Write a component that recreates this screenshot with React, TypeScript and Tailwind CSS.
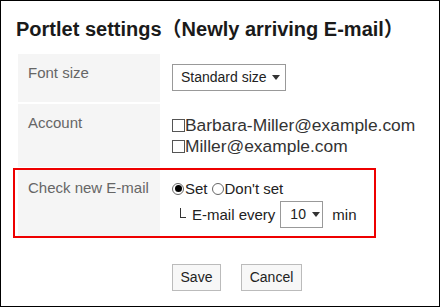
const FONT = "font-['Liberation_Sans','Noto_Sans_CJK_JP',Arial,sans-serif]";

const Caret = () => (
  <svg width="8" height="5" viewBox="0 0 8 5" className="shrink-0">
    <polygon points="0,0 8,0 4,5" fill="#333" />
  </svg>
);

const Check = ({ label }: { label: string }) => (
  <div className="flex items-center h-[21px]">
    <span className="w-[13px] h-[13px] border border-[#555] bg-white shrink-0" />
    <span>{label}</span>
  </div>
);

const Radio = ({ checked, label }: { checked?: boolean; label: string }) => (
  <span className="flex items-center">
    <span className="w-[12px] h-[12px] rounded-full border border-[#666] flex items-center justify-center mr-[1px]">
      {checked && <span className="w-[7px] h-[7px] rounded-full bg-black" />}
    </span>
    <span>{label}</span>
  </span>
);

export default function App() {
  return (
    <div className={`w-[440px] h-[307px] border border-black bg-white ${FONT}`}>
      <h1 className="pt-[17px] pl-[15px] text-[20px] leading-[23px] font-bold text-[#1a1a1a] whitespace-nowrap">
        Portlet settings（Newly arriving E-mail）
      </h1>

      <div className="mt-[13px] ml-[17px] flex flex-col gap-[2px]">
        {/* Font size */}
        <div className="flex h-[48px]">
          <div className="w-[142px] bg-[#f5f5f5] pl-[10px] pt-[10px] text-[15px] leading-[17px] text-[#666]">
            Font size
          </div>
          <div className="pl-[12px] pt-[10px]">
            <div className="w-[114px] h-[27px] border border-[#999] bg-white flex items-center pl-[8px] gap-[5px] text-[14px] text-[#222]">
              <span>Standard size</span>
              <Caret />
            </div>
          </div>
        </div>

        {/* Account */}
        <div className="flex h-[63px]">
          <div className="w-[142px] bg-[#f5f5f5] pl-[10px] pt-[10px] text-[15px] leading-[17px] text-[#666]">
            Account
          </div>
          <div className="pl-[12px] pt-[11px] text-[17.4px] leading-[21px] text-[#333]">
            <Check label="Barbara-Miller@example.com" />
            <Check label="Miller@example.com" />
          </div>
        </div>

        {/* Check new E-mail */}
        <div className="relative flex h-[68px]">
          <div className="w-[142px] bg-[#f5f5f5] pl-[10px] pt-[10px] text-[15px] leading-[17px] text-[#666]">
            Check new E-mail
          </div>
          <div className="pl-[12px] pt-[11px] text-[15px] leading-[17px] text-[#222]">
            <div className="flex items-center gap-[4px]">
              <Radio checked label="Set" />
              <Radio label="Don't set" />
            </div>
            <div className="flex items-center mt-[4px] pl-[8px]">
              <span className="w-[6px] h-[10px] border-l border-b border-[#333] mr-[6px] -mt-[4px]" />
              <span>E-mail every</span>
              <div className="ml-[5px] w-[43px] h-[27px] border border-[#999] bg-white flex items-center pl-[9px] gap-[6px] text-[14px]">
                <span>10</span>
                <Caret />
              </div>
              <span className="ml-[9px]">min</span>
            </div>
          </div>
          <div className="absolute left-[-5px] top-[-1px] w-[363px] h-[70px] border-2 border-[#ee0000] pointer-events-none" />
        </div>
      </div>

      <div className="mt-[27px] pl-[171px] flex gap-[20px] text-[14px] text-[#222]">
        <button className="h-[27px] w-[49px] border border-[#bbb] bg-[#f7f7f7]">Save</button>
        <button className="h-[27px] w-[61px] border border-[#bbb] bg-[#f7f7f7]">Cancel</button>
      </div>
    </div>
  );
}
